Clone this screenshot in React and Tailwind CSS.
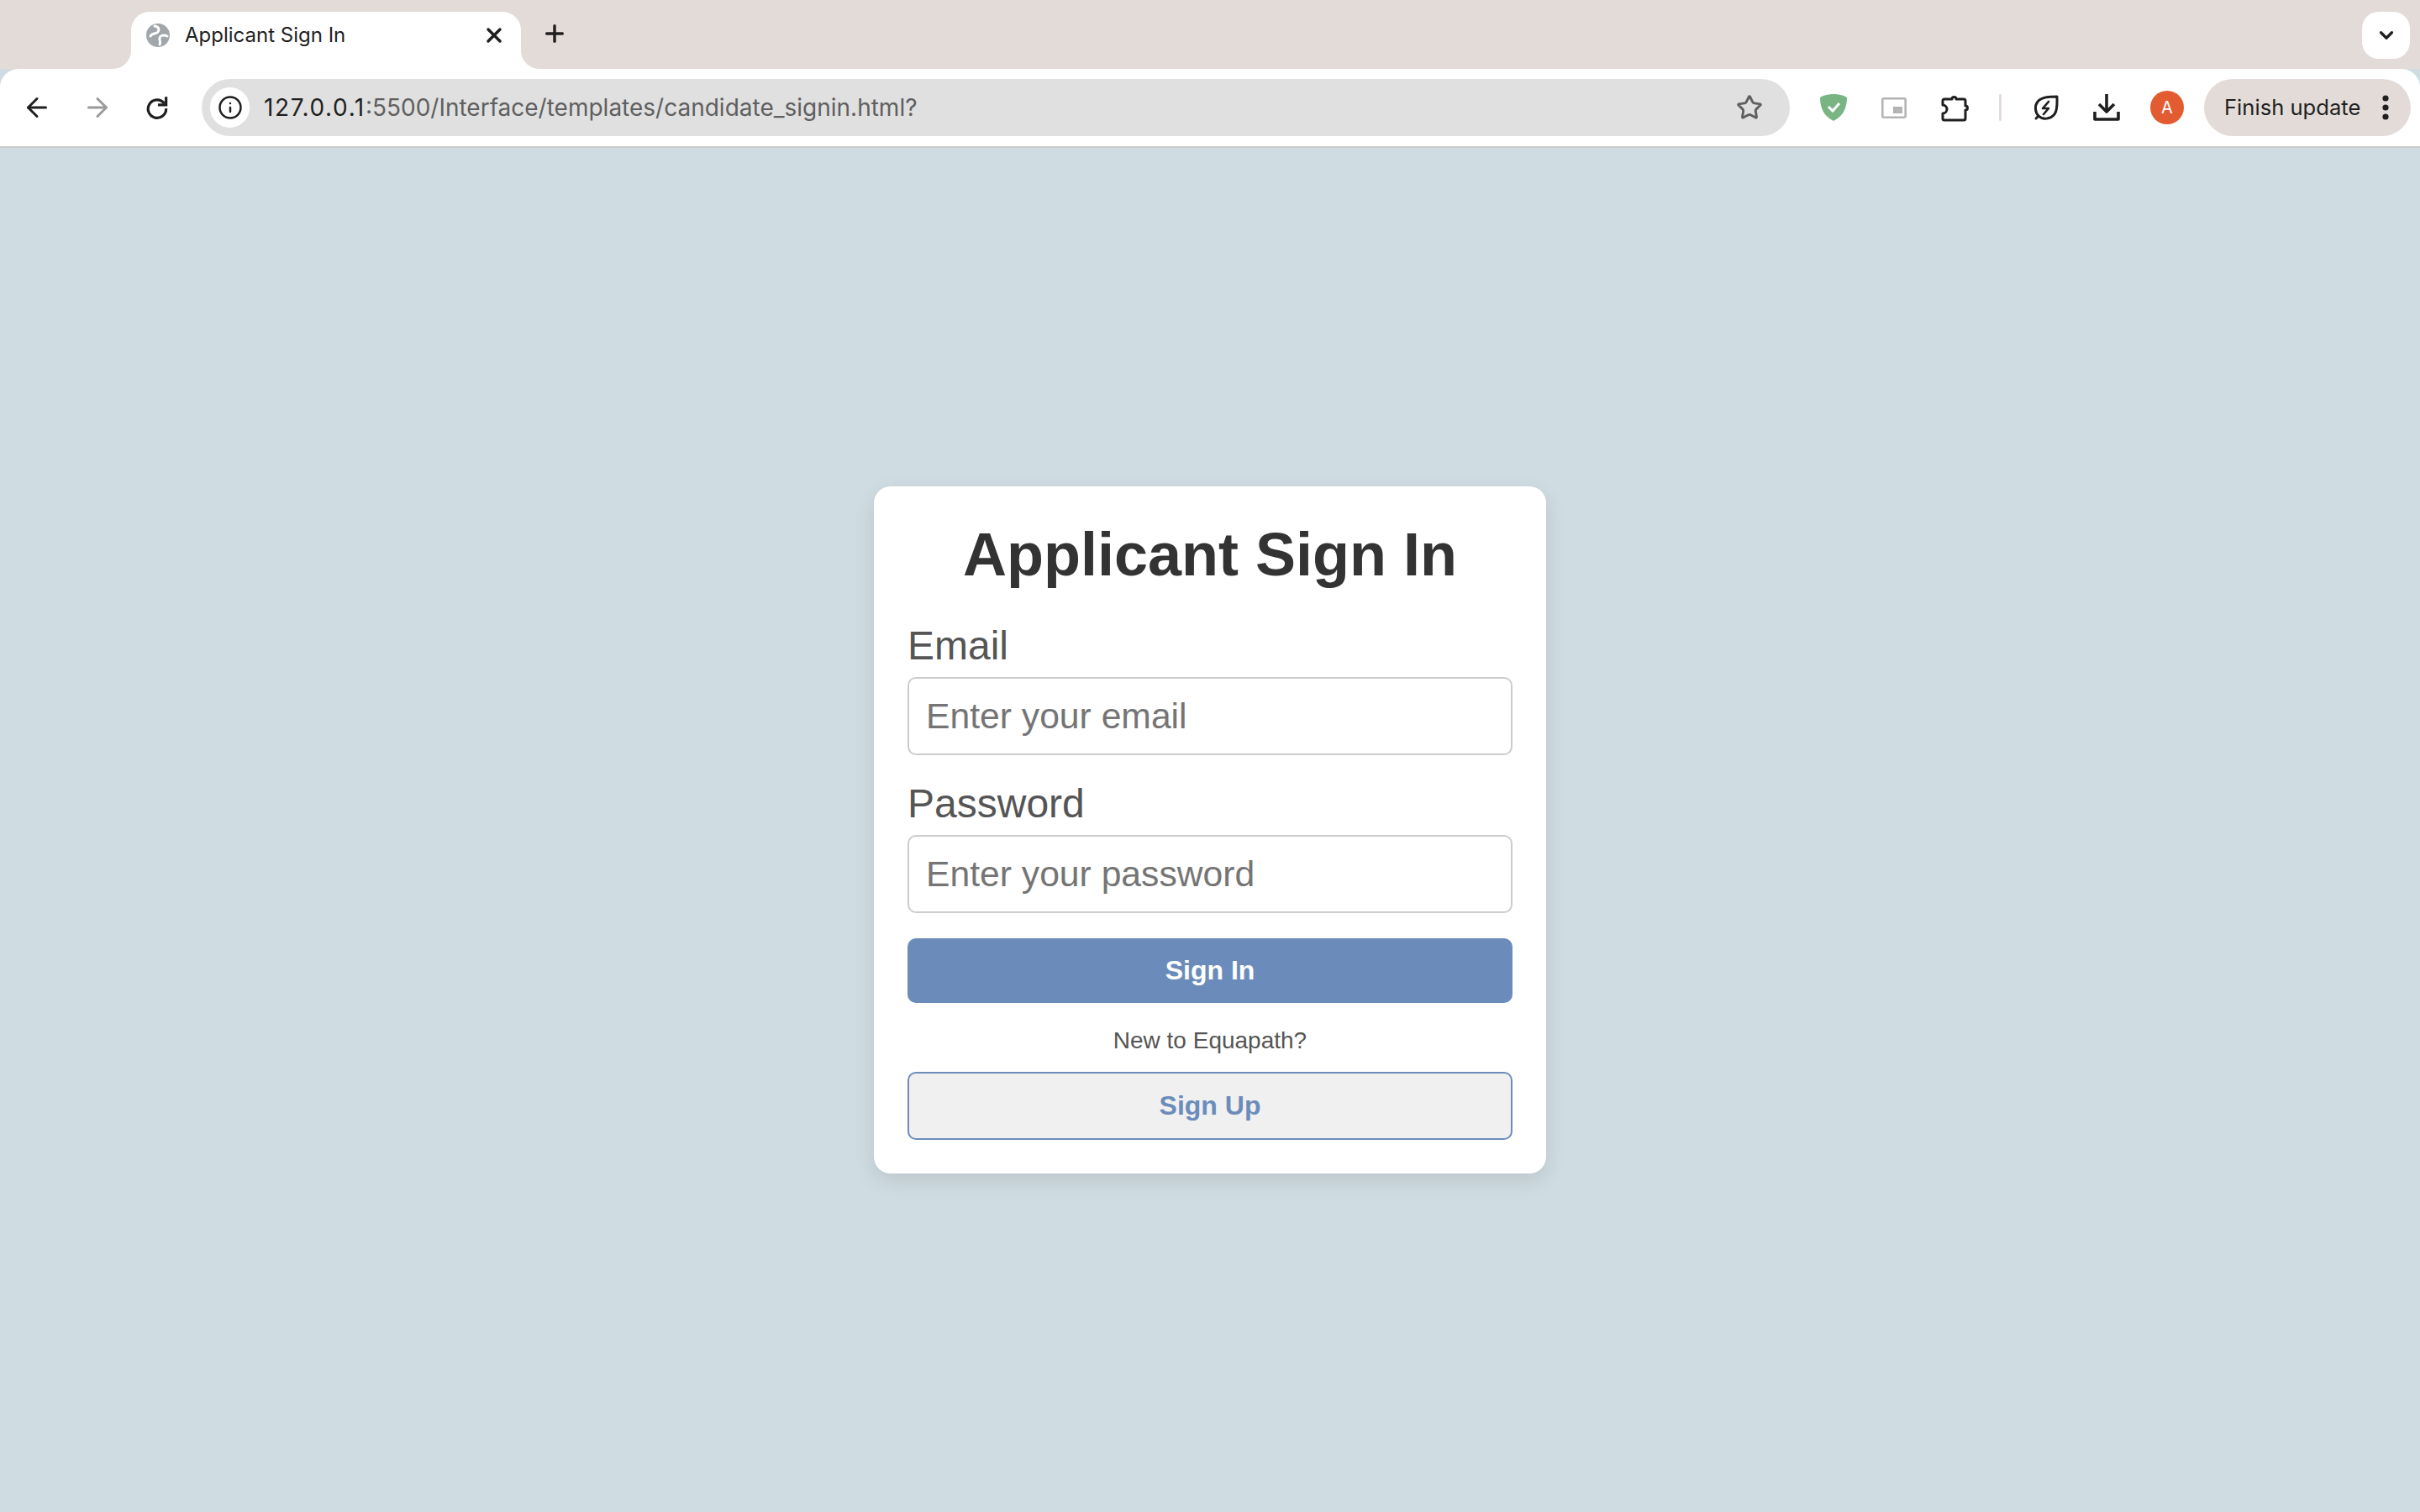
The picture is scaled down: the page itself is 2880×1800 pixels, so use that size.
import { ArrowLeft, ArrowRight, ChevronDown, Info, Plus, Star, X } from "lucide-react";

function Globe() {
  return (
    <svg width="28" height="28" viewBox="0 0 28 28" fill="none" stroke="#fff" strokeWidth="3" strokeLinecap="round">
      <circle cx="14" cy="14" r="14" fill="#a0a6aa" stroke="none" />
      <path d="M10 3c5 1 6 4 4 7s-7 1-9 5" />
      <path d="M25 15c-4-2-8-1-9 2s2 4 0 8" />
    </svg>
  );
}

function Reload() {
  return (
    <svg width="30" height="30" viewBox="0 0 28 28" fill="none" stroke="#1f1f1f" strokeWidth="3">
      <path d="M21 9.5A10 10 0 1 0 23 15" />
      <path d="M23 2v9h-9" />
    </svg>
  );
}

function Shield() {
  return (
    <svg width="32" height="32" viewBox="0 0 32 32">
      <path d="M16 0c6 0 11 1 16 4 0 12-4 22-16 28C4 26 0 16 0 4c5-3 10-4 16-4z" fill="#79b483" />
      <path d="M10 15l5 5 8-9" fill="none" stroke="#fff" strokeWidth="3" />
    </svg>
  );
}

function Pip() {
  return (
    <svg width="30" height="25" viewBox="0 0 30 25">
      <rect x="1.3" y="1.3" width="27.4" height="22.4" rx="2" fill="#fff" stroke="#b4b4b4" strokeWidth="2.6" />
      <rect x="14" y="11" width="11" height="8" fill="#b4b4b4" />
    </svg>
  );
}

function Puzzle() {
  return (
    <svg width="34" height="34" viewBox="0 0 34 34" fill="none" stroke="#1f1f1f" strokeWidth="3" strokeLinejoin="round" className="translate-x-[1px]">
      <path d="M4 7h9a2.5 2.5 0 0 1 5 0h9a2 2 0 0 1 2 2v6a2.5 2.5 0 0 1 0 5v10a2 2 0 0 1-2 2H4a2 2 0 0 1-2-2v-6a5 5 0 0 0 0-10V9a2 2 0 0 1 2-2z" />
    </svg>
  );
}

function Leaf() {
  return (
    <svg width="34" height="34" viewBox="0 0 34 34" fill="none" stroke="#1f1f1f" strokeWidth="3" strokeLinejoin="round" strokeLinecap="round">
      <path d="M30 4C22 4 12 4 7 10 3 15 4 23 8 27c5 5 14 4 19-2 4-5 3-15 3-21z" />
      <path d="M8 27l-3 3" />
      <path d="M20 10l-7 8h7l-6 7" strokeWidth="2.6" />
    </svg>
  );
}

function Tray() {
  return (
    <svg width="34" height="34" viewBox="0 0 34 34" fill="none" stroke="#1f1f1f" strokeWidth="3.6" strokeLinejoin="round">
      <path d="M17 1v21" />
      <path d="M8 13l9 9 9-9" />
      <path d="M3 22v9h28v-9" />
    </svg>
  );
}

function Slot({ children }) {
  return <div className="w-[40px] h-[40px] flex items-center justify-center shrink-0">{children}</div>;
}

function Field({ label, placeholder, type }) {
  return (
    <div>
      <label className="block text-[48px] leading-[55px] text-[#555555] mb-[10px]">{label}</label>
      <input
        type={type}
        placeholder={placeholder}
        className="block w-full h-[93px] px-[20px] bg-white border-2 border-[#cccccc] rounded-[10px] text-[42.67px] placeholder:text-[#757575] outline-none"
      />
    </div>
  );
}

export default function App() {
  return (
    <div className="h-screen flex flex-col bg-[#cfdce1] font-['Liberation_Sans',sans-serif]">
      <header className="shrink-0 font-['Inter',sans-serif]">
        <div className="h-[82px] bg-[#e3dbd8] flex items-end pl-[156px] pr-[12px]">
          <div className="relative w-[464px] h-[68px] bg-white rounded-t-[22px] flex items-center pl-[18px] pr-[18px] pb-[13px]">
            <span className="absolute bottom-0 left-[-22px] w-[22px] h-[22px] bg-[radial-gradient(circle_at_0_0,#e3dbd8_21.5px,#ffffff_22.5px)]" />
            <span className="absolute bottom-0 right-[-22px] w-[22px] h-[22px] bg-[radial-gradient(circle_at_100%_0,#e3dbd8_21.5px,#ffffff_22.5px)]" />
            <Globe />
            <span className="ml-[18px] text-[24px] text-[#1f1f1f] flex-1">Applicant Sign In</span>
            <X size={28} strokeWidth={3} className="text-[#1f1f1f]" />
          </div>
          <Plus size={32} strokeWidth={2.6} className="ml-[24px] mb-[26px] text-[#1f1f1f]" />
          <div className="ml-auto mb-[12px] w-[57px] h-[56px] bg-white rounded-[20px] flex items-center justify-center">
            <ChevronDown size={26} strokeWidth={3} className="text-[#1f1f1f]" />
          </div>
        </div>
        <div className="h-[94px] bg-white border-b-2 border-[#cccccc] rounded-t-[22px] flex items-center pl-[24px] pr-[12px] gap-[32px]">
          <Slot><ArrowLeft size={36} strokeWidth={2} className="text-[#1f1f1f]" /></Slot>
          <Slot><ArrowRight size={36} strokeWidth={2} className="text-[#9a9a9a]" /></Slot>
          <Slot><Reload /></Slot>
          <div className="w-[1890px] h-[68px] bg-[#e0e0e0] rounded-full flex items-center pl-[10px] pr-[32px] shrink-0">
            <div className="w-[47px] h-[48px] bg-white rounded-full flex items-center justify-center">
              <Info size={30} strokeWidth={2} className="text-[#1f1f1f]" />
            </div>
            <div className="ml-[17px] flex-1 text-[28px] text-[#5f5f5f] whitespace-nowrap">
              <span className="text-[#1f1f1f] tracking-[1.6px]">127.0.0.1</span>:5500/Interface/templates/candidate_signin.html?
            </div>
            <Star size={32} strokeWidth={2.2} className="text-[#5f5f5f]" />
          </div>
          <Slot><Shield /></Slot>
          <Slot><Pip /></Slot>
          <Slot><Puzzle /></Slot>
          <div className="w-[3px] h-[32px] ml-[1px] mr-[1px] bg-[#e3dbd8] rounded-full shrink-0" />
          <Slot><Leaf /></Slot>
          <Slot><Tray /></Slot>
          <Slot>
            <div className="w-[40px] h-[40px] rounded-full bg-[#e35c31] text-white text-[20px] flex items-center justify-center">A</div>
          </Slot>
          <div className="w-[246px] h-[68px] -ml-[8px] bg-[#e3dbd8] rounded-full flex items-center pl-[24px] pr-[26px] shrink-0">
            <span className="text-[25.6px] text-[#1f1f1f] flex-1 whitespace-nowrap">Finish update</span>
            <svg width="8" height="30" viewBox="0 0 8 30" fill="#1f1f1f">
              <circle cx="4" cy="4" r="3.6" />
              <circle cx="4" cy="15" r="3.6" />
              <circle cx="4" cy="26" r="3.6" />
            </svg>
          </div>
        </div>
      </header>

      <main className="flex-1 flex items-center justify-center">
        <div className="w-[800px] bg-white rounded-[20px] p-[40px] shadow-[0_8px_24px_rgba(0,0,0,0.1)]">
          <h1 className="text-[72px] leading-[82px] font-bold text-[#333333] text-center mb-[40px]">Applicant Sign In</h1>
          <div className="flex flex-col gap-[30px]">
            <Field label="Email" placeholder="Enter your email" type="email" />
            <Field label="Password" placeholder="Enter your password" type="password" />
          </div>
          <button className="block w-full h-[77px] pb-[2px] mt-[30px] bg-[#6b8cba] rounded-[10px] text-white text-[32px] font-bold">Sign In</button>
          <p className="mt-[28px] mb-[20px] text-[28px] leading-[34px] text-[#555555] text-center">New to Equapath?</p>
          <button className="block w-full h-[81px] pb-[2px] bg-[#f0f0f0] border-2 border-[#6b8cba] rounded-[10px] text-[#6b8cba] text-[32px] font-bold">Sign Up</button>
        </div>
      </main>
    </div>
  );
}
